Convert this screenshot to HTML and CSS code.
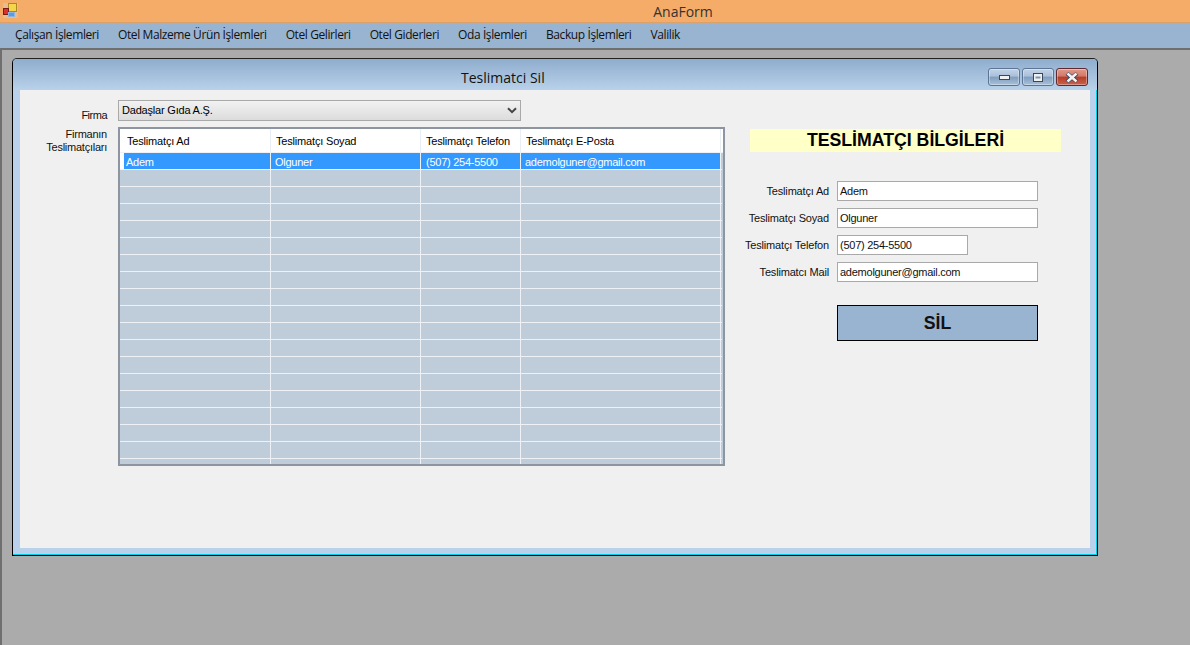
FILE: index.html
```html
<!DOCTYPE html>
<html lang="tr">
<head>
<meta charset="utf-8">
<title>AnaForm</title>
<link rel="stylesheet" href="styles.css">
</head>
<body>
<div class="app">
  <header class="app-title">
    <svg class="app-icon" width="15" height="15" viewBox="0 0 15 15">
      <rect x="0" y="0" width="15" height="15" fill="#e6bd93"/>
      <rect x="5.5" y="0.5" width="8" height="8" fill="#f5d64a" stroke="#a88a20"/>
      <rect x="0.5" y="5.5" width="5" height="6" fill="#d8322a" stroke="#7a1a14"/>
      <rect x="5.5" y="9.5" width="6" height="4" fill="#5a9be8" stroke="#8fb4dc"/>
    </svg>
    <span class="app-name">AnaForm</span>
  </header>
  <nav class="menu">
    <span>Çalışan İşlemleri</span>
    <span>Otel Malzeme Ürün İşlemleri</span>
    <span>Otel Gelirleri</span>
    <span>Otel Giderleri</span>
    <span>Oda İşlemleri</span>
    <span>Backup İşlemleri</span>
    <span>Valilik</span>
  </nav>
  <main class="desktop">
    <section class="window">
      <div class="caption">
        <span class="caption-title">Teslimatci Sil</span>
        <div class="caption-btns">
          <button class="cbtn"><svg width="14" height="7" viewBox="0 0 14 7"><rect x="2.5" y="1.5" width="10" height="4" fill="#f0f0f0" stroke="#39465c"/></svg></button>
          <button class="cbtn"><svg width="14" height="11" viewBox="0 0 14 11"><rect x="2.5" y="1.5" width="9" height="8" fill="#f0f0f0" stroke="#39465c"/><rect x="4.5" y="4.5" width="5" height="2" fill="#7f93ad"/></svg></button>
          <button class="cbtn close"><svg width="16" height="11" viewBox="0 0 16 11"><path d="M3 1.5 L13 9.5 M13 1.5 L3 9.5" stroke="#39465c" stroke-width="4"/><path d="M3.5 1.5 L12.5 9.5 M12.5 1.5 L3.5 9.5" stroke="#f4f4f4" stroke-width="2.4"/></svg></button>
        </div>
      </div>
      <div class="client">
        <div class="left-pane">
          <div class="firma-row">
            <label class="lbl firma-lbl">Firma</label>
            <div class="combo"><span>Dadaşlar Gıda A.Ş.</span><svg width="10" height="7" viewBox="0 0 10 7"><path d="M1 1.2 L5 5.2 L9 1.2" fill="none" stroke="#444" stroke-width="2"/></svg></div>
          </div>
          <div class="grid-row">
            <label class="lbl grid-lbl">Firmanın<br>Teslimatçıları</label>
            <div class="grid">
              <div class="grid-head">
                <div class="c1">Teslimatçı Ad</div>
                <div class="c2">Teslimatçı Soyad</div>
                <div class="c3">Teslimatçı Telefon</div>
                <div class="c4">Teslimatçı E-Posta</div>
              </div>
              <div class="grid-body">
                <div class="row sel">
                  <div class="c1">Adem</div>
                  <div class="c2">Olguner</div>
                  <div class="c3">(507) 254-5500</div>
                  <div class="c4">ademolguner@gmail.com</div>
                </div>
                <div class="row"><div class="c1"></div><div class="c2"></div><div class="c3"></div><div class="c4"></div></div>
                <div class="row"><div class="c1"></div><div class="c2"></div><div class="c3"></div><div class="c4"></div></div>
                <div class="row"><div class="c1"></div><div class="c2"></div><div class="c3"></div><div class="c4"></div></div>
                <div class="row"><div class="c1"></div><div class="c2"></div><div class="c3"></div><div class="c4"></div></div>
                <div class="row"><div class="c1"></div><div class="c2"></div><div class="c3"></div><div class="c4"></div></div>
                <div class="row"><div class="c1"></div><div class="c2"></div><div class="c3"></div><div class="c4"></div></div>
                <div class="row"><div class="c1"></div><div class="c2"></div><div class="c3"></div><div class="c4"></div></div>
                <div class="row"><div class="c1"></div><div class="c2"></div><div class="c3"></div><div class="c4"></div></div>
                <div class="row"><div class="c1"></div><div class="c2"></div><div class="c3"></div><div class="c4"></div></div>
                <div class="row"><div class="c1"></div><div class="c2"></div><div class="c3"></div><div class="c4"></div></div>
                <div class="row"><div class="c1"></div><div class="c2"></div><div class="c3"></div><div class="c4"></div></div>
                <div class="row"><div class="c1"></div><div class="c2"></div><div class="c3"></div><div class="c4"></div></div>
                <div class="row"><div class="c1"></div><div class="c2"></div><div class="c3"></div><div class="c4"></div></div>
                <div class="row"><div class="c1"></div><div class="c2"></div><div class="c3"></div><div class="c4"></div></div>
                <div class="row"><div class="c1"></div><div class="c2"></div><div class="c3"></div><div class="c4"></div></div>
                <div class="row"><div class="c1"></div><div class="c2"></div><div class="c3"></div><div class="c4"></div></div>
                <div class="row"><div class="c1"></div><div class="c2"></div><div class="c3"></div><div class="c4"></div></div>
                <div class="row"><div class="c1"></div><div class="c2"></div><div class="c3"></div><div class="c4"></div></div>
              </div>
            </div>
          </div>
        </div>
        <aside class="right-pane">
          <h2 class="info-title">TESLİMATÇI BİLGİLERİ</h2>
          <div class="fields">
            <div class="field"><label class="lbl">Teslimatçı Ad</label><div class="input wide">Adem</div></div>
            <div class="field"><label class="lbl">Teslimatçı Soyad</label><div class="input wide">Olguner</div></div>
            <div class="field"><label class="lbl">Teslimatçı Telefon</label><div class="input narrow">(507) 254-5500</div></div>
            <div class="field"><label class="lbl">Teslimatcı Mail</label><div class="input wide">ademolguner@gmail.com</div></div>
          </div>
          <button class="sil">SİL</button>
        </aside>
      </div>
    </section>
  </main>
</div>
</body>
</html>
```
FILE: styles.css
```css
* { box-sizing: border-box; }
html, body { margin: 0; padding: 0; height: 100%; overflow: hidden; }
body { font-family: "Liberation Sans", Arial, sans-serif; font-size: 11px; color: #000; }
.app { width: 1190px; height: 645px; display: flex; flex-direction: column; background: #ababab; }

.app-title { height: 23px; flex: none; background: #f4ac68; border-bottom: 1px solid #d9a26c; display: flex; align-items: center; justify-content: center; padding-left: 176px; position: relative; }
.app-icon { position: absolute; left: 3px; top: 3px; }
.app-name { font-family: "Open Sans", sans-serif; font-size: 14px; color: #333; }

.menu { height: 25px; flex: none; background: #99b4d1; display: flex; align-items: center; padding: 0 0 3px 15px; gap: 19px; font-family: "Open Sans", sans-serif; font-size: 12px; letter-spacing: -0.4px; color: #111; }

.desktop { flex: 1; position: relative; background: #ababab; border-top: 2px solid #6f6f6f; border-left: 2px solid #6f6f6f; }

.window { position: absolute; left: 10px; top: 8px; width: 1086px; height: 498px; background: #b9d1ea; border: 1px solid #000; border-top-color: #222; border-radius: 5px 5px 0 0; box-shadow: inset -1px -1px 0 #00d0e8; display: flex; flex-direction: column; padding: 0 7px 7px; }

.caption { height: 31px; flex: none; margin: 0 -7px; padding: 0 9px 0 0; background: linear-gradient(#8fadce, #b9d1ea); border-radius: 4px 4px 0 0; display: flex; align-items: flex-start; position: relative; }
.caption-title { position: absolute; left: 448px; top: 9px; font-family: "Open Sans", sans-serif; font-size: 14px; color: #111; }
.caption-btns { margin-left: auto; margin-top: 9px; display: flex; gap: 2px; }
.cbtn { width: 32px; height: 18px; padding: 0; border: 1px solid #5c7596; border-radius: 3px; background: linear-gradient(#c3d3e6 0, #a9c0da 45%, #7f9dbd 50%, #a8c0da 100%); display: flex; align-items: center; justify-content: center; box-shadow: inset 0 0 0 1px rgba(255,255,255,.35); }
.cbtn.close { border-color: #5e2a30; background: linear-gradient(#e09a8c 0, #d27868 45%, #b53c28 50%, #c8624e 100%); }

.client { flex: 1; background: #f0f0f0; display: flex; padding: 10px 0 0; }
.lbl { display: block; text-align: right; color: #111; white-space: nowrap; letter-spacing: -0.18px; }

.left-pane { width: 705px; flex: none; display: flex; flex-direction: column; gap: 6px; }
.firma-row { display: flex; align-items: center; height: 21px; }
.firma-lbl { width: 87px; padding-top: 8px; letter-spacing: -0.5px; }
.combo { width: 403px; height: 21px; margin-left: 11px; border: 1px solid #a9a9a9; background: linear-gradient(#f2f2f2, #dcdcdc); display: flex; align-items: center; justify-content: space-between; padding: 0 3px 1px 3px; letter-spacing: -0.2px; }
.grid-row { display: flex; align-items: flex-start; }
.grid-lbl { width: 87px; line-height: 13px; padding-top: 1px; letter-spacing: -0.25px; }

.grid { width: 607px; height: 339px; margin-left: 11px; border: 2px solid #8d95a1; background: #bfcddb; overflow: hidden; display: flex; flex-direction: column; }
.grid-head { height: 24px; flex: none; display: flex; background: #fff; border-bottom: 1px solid #eef2f7; white-space: nowrap; letter-spacing: -0.18px; }
.grid-head > div { display: flex; align-items: center; padding-left: 5px; border-right: 1px solid #e8eef6; }
.grid-head .c1 { padding-left: 7px; }
.grid-body { flex: 1; overflow: hidden; }
.row { height: 17px; display: flex; border-bottom: 1px solid #eef2f6; margin-right: 1px; }
.row > div { border-right: 1px solid #eef2f6; height: 16px; padding-left: 5px; line-height: 18px; white-space: nowrap; letter-spacing: -0.25px; }
.c1 { width: 151px; }
.c2 { width: 150px; }
.c3 { width: 100px; }
.c4 { width: 200px; }
.row .c1 { padding-left: 6px; }
.row .c2, .row .c4 { padding-left: 4px; }
.sel { background: linear-gradient(to right, #fff 4px, #bfcddb 4px); color: #fff; }
.row.sel > div { background: #3399ff; }
.row.sel .c1 { width: 147px; margin-left: 4px; padding-left: 2px; }

.right-pane { flex: 1; display: flex; flex-direction: column; padding-left: 25px; }
.info-title { width: 311px; height: 23px; margin: 29px 0 0; background: #ffffc8; font-size: 17.7px; font-weight: bold; line-height: 22px; text-align: center; color: #000; }
.fields { display: flex; flex-direction: column; gap: 7px; margin-top: 29px; }
.field { display: flex; align-items: center; height: 20px; }
.field .lbl { width: 89px; margin-left: -10px; }
.input { height: 20px; margin-left: 8px; border: 1px solid #a9a9a9; background: #fff; padding-left: 2px; line-height: 18px; color: #111; letter-spacing: -0.25px; }
.wide { width: 201px; }
.narrow { width: 131px; }
.sil { width: 201px; height: 36px; margin: 23px 0 0 87px; background: #99b4d1; border: 1px solid #000; font: bold 17.7px "Liberation Sans", Arial, sans-serif; color: #111; padding: 0; }
```
